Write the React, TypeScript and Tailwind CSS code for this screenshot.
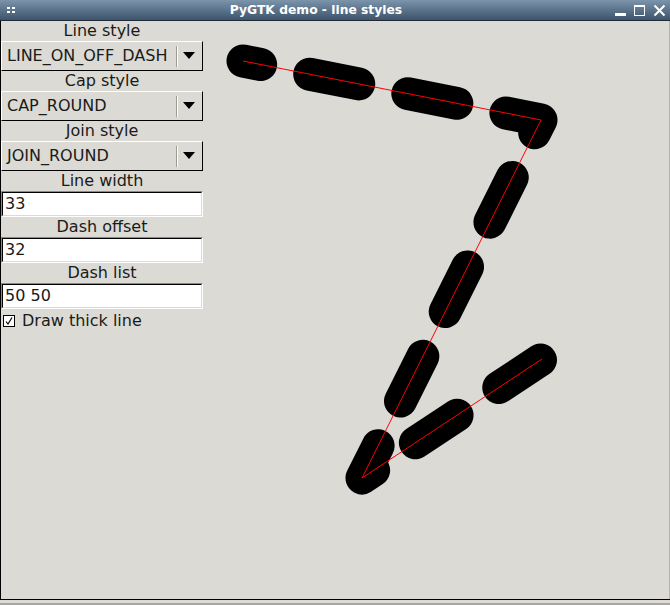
import React from 'react';

const font = {fontFamily: '"DejaVu Sans", Verdana, sans-serif'};

const Label = ({text}: {text: string}) => (
  <div className="h-[20px] leading-[20px] text-center text-[16px] text-[#1a1a1a]">{text}</div>
);

const Combo = ({value}: {value: string}) => (
  <div className="h-[30px] flex items-center border-t border-l border-white border-b border-r border-b-black border-r-black bg-[#dcdad5]">
    <span className="flex-1 pl-[5px] text-[16px] text-[#1a1a1a] leading-none">{value}</span>
    <div className="h-[21px] w-[2px] border-l border-[#9d9a94] border-r border-r-white" />
    <svg width="24" height="30" viewBox="0 0 24 30" className="shrink-0">
      <polygon points="5,11 17,11 11,18" fill="#000" />
    </svg>
  </div>
);

const Entry = ({value}: {value: string}) => (
  <div className="h-[26px] border-t border-l border-[#8d8a85] border-b border-r border-b-white border-r-white">
    <div className="h-full bg-white border-t border-l border-black border-b border-r border-b-[#dcdad5] border-r-[#dcdad5] flex items-center pl-[2px] text-[16px] text-[#1a1a1a]">
      {value}
    </div>
  </div>
);

const Canvas = () => {
  const pts = '40,40 338,99 159,457 339,338';
  return (
    <svg width="466" height="578" viewBox="0 0 466 578" className="block">
      <polyline
        points={pts}
        fill="none"
        stroke="#000"
        strokeWidth={33}
        strokeLinecap="round"
        strokeLinejoin="round"
        strokeDasharray="50 50"
        strokeDashoffset={32}
      />
      <polyline points={pts} fill="none" stroke="#ff0000" strokeWidth={1} />
    </svg>
  );
};

export default function App() {
  return (
    <div className="w-[670px] h-[605px] bg-[#dcdad5] flex flex-col overflow-hidden" style={font}>
      {/* title bar */}
      <div className="h-[21px] shrink-0 flex items-center bg-gradient-to-b from-[#7c95ab] to-[#3d546c] border-b border-[#1e2a36]">
        <svg width="22" height="20" viewBox="0 0 22 20" className="shrink-0">
          <rect x="7" y="7" width="3" height="2" fill="#fff" />
          <rect x="12" y="7" width="3" height="2" fill="#fff" />
          <rect x="7" y="11" width="3" height="2" fill="#fff" />
          <rect x="12" y="11" width="3" height="2" fill="#fff" />
        </svg>
        <div className="flex-1 text-center text-white font-bold text-[12.3px] leading-none">
          PyGTK demo - line styles
        </div>
        <svg width="60" height="20" viewBox="0 0 60 20" className="shrink-0">
          <rect x="5" y="13" width="11" height="3" fill="#fff" />
          <rect x="24.5" y="5.5" width="10" height="10" fill="none" stroke="#fff" strokeWidth="1" />
          <rect x="24" y="5" width="11" height="2" fill="#fff" />
          <path d="M44.5 5.5 L54.5 15.5 M54.5 5.5 L44.5 15.5" stroke="#fff" strokeWidth="2" />
        </svg>
      </div>

      {/* body */}
      <div className="flex-1 flex border-l border-black border-r border-r-[#b5b2ac]">
        <div className="w-[202px] shrink-0 flex flex-col">
          <Label text="Line style" />
          <Combo value="LINE_ON_OFF_DASH" />
          <Label text="Cap style" />
          <Combo value="CAP_ROUND" />
          <Label text="Join style" />
          <Combo value="JOIN_ROUND" />
          <Label text="Line width" />
          <Entry value="33" />
          <Label text="Dash offset" />
          <Entry value="32" />
          <Label text="Dash list" />
          <Entry value="50 50" />
          <div className="h-[24px] flex items-center gap-[6px] pl-[1px] text-[16px] text-[#1a1a1a]">
            <svg width="14" height="14" viewBox="0 0 14 14" className="shrink-0">
              <rect x="1.5" y="1.5" width="11" height="11" fill="#fff" stroke="#000" strokeWidth="1" />
              <path d="M4 7.5 L6 10 L10 3.5" fill="none" stroke="#000" strokeWidth="1.2" />
            </svg>
            <span>Draw thick line</span>
          </div>
        </div>
        <div className="flex-1 overflow-hidden">
          <Canvas />
        </div>
      </div>

      {/* bottom frame */}
      <div className="h-[6px] shrink-0 border-t border-black bg-[#dcdad5] border-b-2 border-b-[#a9a6a0]" />
    </div>
  );
}
